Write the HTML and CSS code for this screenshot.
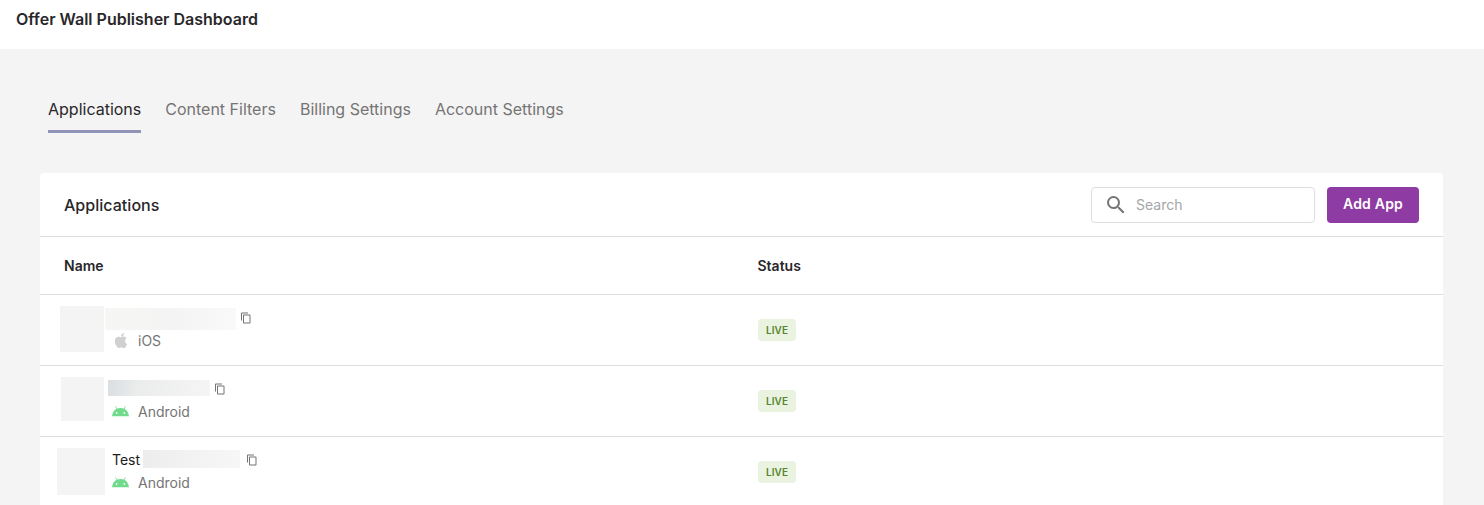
FILE: index.html
```
<!DOCTYPE html>
<html lang="en">
<head>
<meta charset="utf-8">
<title>Offer Wall Publisher Dashboard</title>
<link rel="stylesheet" href="styles.css">
</head>

<body>
<svg class="sprite" aria-hidden="true">
    <symbol id="copy" viewBox="0 0 24 24">
        <path d="M16 1H4c-1.1 0-2 .9-2 2v14h2V3h12V1zm3 4H8c-1.1 0-2 .9-2 2v14c0 1.1.9 2 2 2h11c1.1 0 2-.9 2-2V7c0-1.1-.9-2-2-2zm0 16H8V7h11v14z"/>
    </symbol>
    <symbol id="android" viewBox="0 0 16 10">
        <path d="M11.7 2.5l1.3-2.1-.6-.4-1.4 2.2A8 8 0 0 0 5 2.2L3.6 0l-.6.4 1.3 2.1C1.900 3.900.300 6.600 0 9.500h16c-.3-2.900-1.900-5.600-4.300-7zM4.400 7.100a.8.8 0 1 1 0-1.600.8.8 0 0 1 0 1.600zm7.200 0a.8.8 0 1 1 0-1.600.8.8 0 0 1 0 1.600z"/>
    </symbol>
    <symbol id="apple" viewBox="2 0 20 24">
        <path d="M12.152 6.896c-.948 0-2.415-1.078-3.960-1.040-2.040.027-3.910 1.183-4.961 3.014-2.117 3.675-.546 9.103 1.519 12.090 1.013 1.454 2.208 3.090 3.792 3.039 1.520-.065 2.090-.987 3.935-.987 1.831 0 2.350.987 3.960.948 1.637-.026 2.676-1.480 3.676-2.948 1.156-1.688 1.636-3.325 1.662-3.415-.039-.013-3.182-1.221-3.220-4.857-.026-3.040 2.480-4.494 2.597-4.559-1.429-2.090-3.623-2.324-4.390-2.376-2-.156-3.675 1.090-4.610 1.090zM15.530 3.830c.843-1.012 1.400-2.427 1.245-3.830-1.207.052-2.662.805-3.532 1.818-.780.896-1.454 2.338-1.273 3.714 1.338.104 2.715-.688 3.559-1.701"/>
    </symbol>
</svg>

<header class="topbar">
    <h1>Offer Wall Publisher Dashboard</h1>
</header>

<nav class="tabs">
    <a class="tab active">Applications</a>
    <a class="tab">Content Filters</a>
    <a class="tab">Billing Settings</a>
    <a class="tab">Account Settings</a>
</nav>

<main class="card">
    <div class="card-header">
        <h2>Applications</h2>
        <label class="search">
            <svg class="search-icon" viewBox="0 0 24 24"><path d="M15.500 14h-.790l-.280-.270A6.471 6.471 0 0 0 16 9.500 6.500 6.500 0 1 0 9.500 16c1.610 0 3.090-.590 4.230-1.570l.270.280v.790l5 4.990L20.490 19l-4.990-5zm-6 0C7.010 14 5 11.990 5 9.500S7.010 5 9.500 5 14 7.010 14 9.500 11.990 14 9.500 14z"/></svg>
            <input type="text" placeholder="Search">
        </label>
        <button class="add-button">Add App</button>
    </div>

    <div class="row head">
        <div>Name</div>
        <div>Status</div>
    </div>

    <div class="row app first">
        <div class="app-cell">
            <span class="thumb"></span>
            <div class="info">
                <div class="name"><span class="mask"></span><svg class="copy"><use href="#copy"/></svg></div>
                <div class="platform"><svg class="apple"><use href="#apple"/></svg>iOS</div>
            </div>
        </div>
        <div><span class="badge">LIVE</span></div>
    </div>

    <div class="row app second">
        <div class="app-cell">
            <span class="thumb"></span>
            <div class="info">
                <div class="name"><span class="mask"></span><svg class="copy"><use href="#copy"/></svg></div>
                <div class="platform"><svg class="android"><use href="#android"/></svg>Android</div>
            </div>
        </div>
        <div><span class="badge">LIVE</span></div>
    </div>

    <div class="row app third">
        <div class="app-cell">
            <span class="thumb"></span>
            <div class="info">
                <div class="name"><span class="title">Test</span><span class="mask"></span><svg class="copy"><use href="#copy"/></svg></div>
                <div class="platform"><svg class="android"><use href="#android"/></svg>Android</div>
            </div>
        </div>
        <div><span class="badge">LIVE</span></div>
    </div>
</main>
</body>
</html>
```
FILE: styles.css
```
*{
    box-sizing: border-box;
}
body{
    margin: 0;
    height: 505px;
    overflow: hidden;
    background: #f4f4f4;
    color: #29272a;
    font-family: Inter, sans-serif;
    font-size: 14px;
}
.sprite{
    display: none;
}
.topbar{
    height: 49px;
    padding: 7px 16px;
    background: #fff;
}
h1, h2{
    margin: 0;
    font-size: 16px;
    line-height: 24px;
}
h1{
    font-weight: 600;
}
h2{
    margin-right: auto;
    font-weight: 500;
    letter-spacing: 0.03px;
}

/* tabs */
.tabs{
    display: flex;
    gap: 24px;
    padding: 48px 48px 40px;
}
.tab{
    height: 36px;
    color: #757575;
    font-size: 16px;
    line-height: 24px;
}
.tab.active{
    color: #29272a;
    border-bottom: 3px solid #9095b8;
}

/* card */
.card{
    width: 1403px;
    margin-left: 40px;
    background: #fff;
    border-radius: 4px 4px 0 0;
}
.card-header{
    display: flex;
    align-items: center;
    height: 64px;
    padding: 0 24px;
    border-bottom: 1px solid #dedede;
}
.search{
    display: flex;
    align-items: center;
    width: 224px;
    height: 36px;
    margin-right: 12px;
    padding-left: 12px;
    border: 1px solid #dedede;
    border-radius: 4px;
}
.search-icon{
    width: 24px;
    height: 24px;
    fill: #757575;
}
.search input{
    width: 160px;
    margin-left: 8px;
    padding: 0;
    border: 0;
    outline: 0;
    font: 14px Inter, sans-serif;
}
.search input::placeholder{
    color: #a6a6a6;
}
.add-button{
    width: 92px;
    height: 36px;
    padding: 0 0 2px;
    border: 0;
    border-radius: 4px;
    background: #8e3ba3;
    color: #fff;
    font: 600 14px Inter, sans-serif;
    letter-spacing: 0.2px;
}

/* table */
.row{
    display: grid;
    grid-template-columns: 693.5px 1fr;
    align-items: center;
    height: 71px;
    padding-left: 24px;
    border-bottom: 1px solid #dedede;
}
.row.head{
    height: 58px;
    font-weight: 600;
}
.row.app{
    padding-left: 0;
    grid-template-columns: 718px 1fr;
}
.app-cell{
    display: flex;
    align-items: flex-start;
    height: 70px;
    padding-top: 11px;
}
.thumb{
    background: #f4f4f4;
}
.first .thumb{
    width: 44px;
    height: 46px;
    margin: 0 0.6px 0 20.4px;
}
.second .thumb{
    width: 43px;
    height: 44px;
    margin: 0 4px 0 21px;
}
.third .thumb{
    width: 48px;
    height: 47px;
    margin: 0 7px 0 17px;
}
.name{
    display: flex;
    align-items: center;
    height: 24px;
    color: #1c1b1d;
}
.title{
    padding-bottom: 2px;
}
.first .mask{
    width: 131px;
    height: 22px;
    margin: 2px 4px 0 0;
    background: linear-gradient(90deg, #f6f7f4, #f4f4f4 50%, #f9f9f9);
}
.second .mask{
    width: 102px;
    height: 16px;
    margin: 0 4px 2px 0;
    background: linear-gradient(100deg, #d9dee2, #ebecec 30%, #f5f5f5);
}
.third .mask{
    width: 97px;
    height: 18px;
    margin: 0 6px 2px 3px;
    background: linear-gradient(100deg, #ededed, #f7f7f7);
}
.copy{
    width: 12px;
    height: 12px;
    fill: #757575;
}
.platform{
    display: flex;
    align-items: center;
    height: 20px;
    color: #757575;
}
.first .platform{
    padding-left: 9px;
}
.second .platform{
    padding-left: 4px;
}
.apple{
    width: 14px;
    height: 15px;
    margin: 1px 10px 0 0;
    fill: #d0d0d0;
}
.android{
    width: 17px;
    height: 11px;
    margin: 1px 9px 0 0;
    fill: #71da8d;
}
.badge{
    display: block;
    width: 38px;
    height: 22px;
    border-radius: 4px;
    background: #e9f3e0;
    color: #57852f;
    font-size: 10px;
    font-weight: 600;
    letter-spacing: 0.1px;
    line-height: 22px;
    text-align: center;
}
```
